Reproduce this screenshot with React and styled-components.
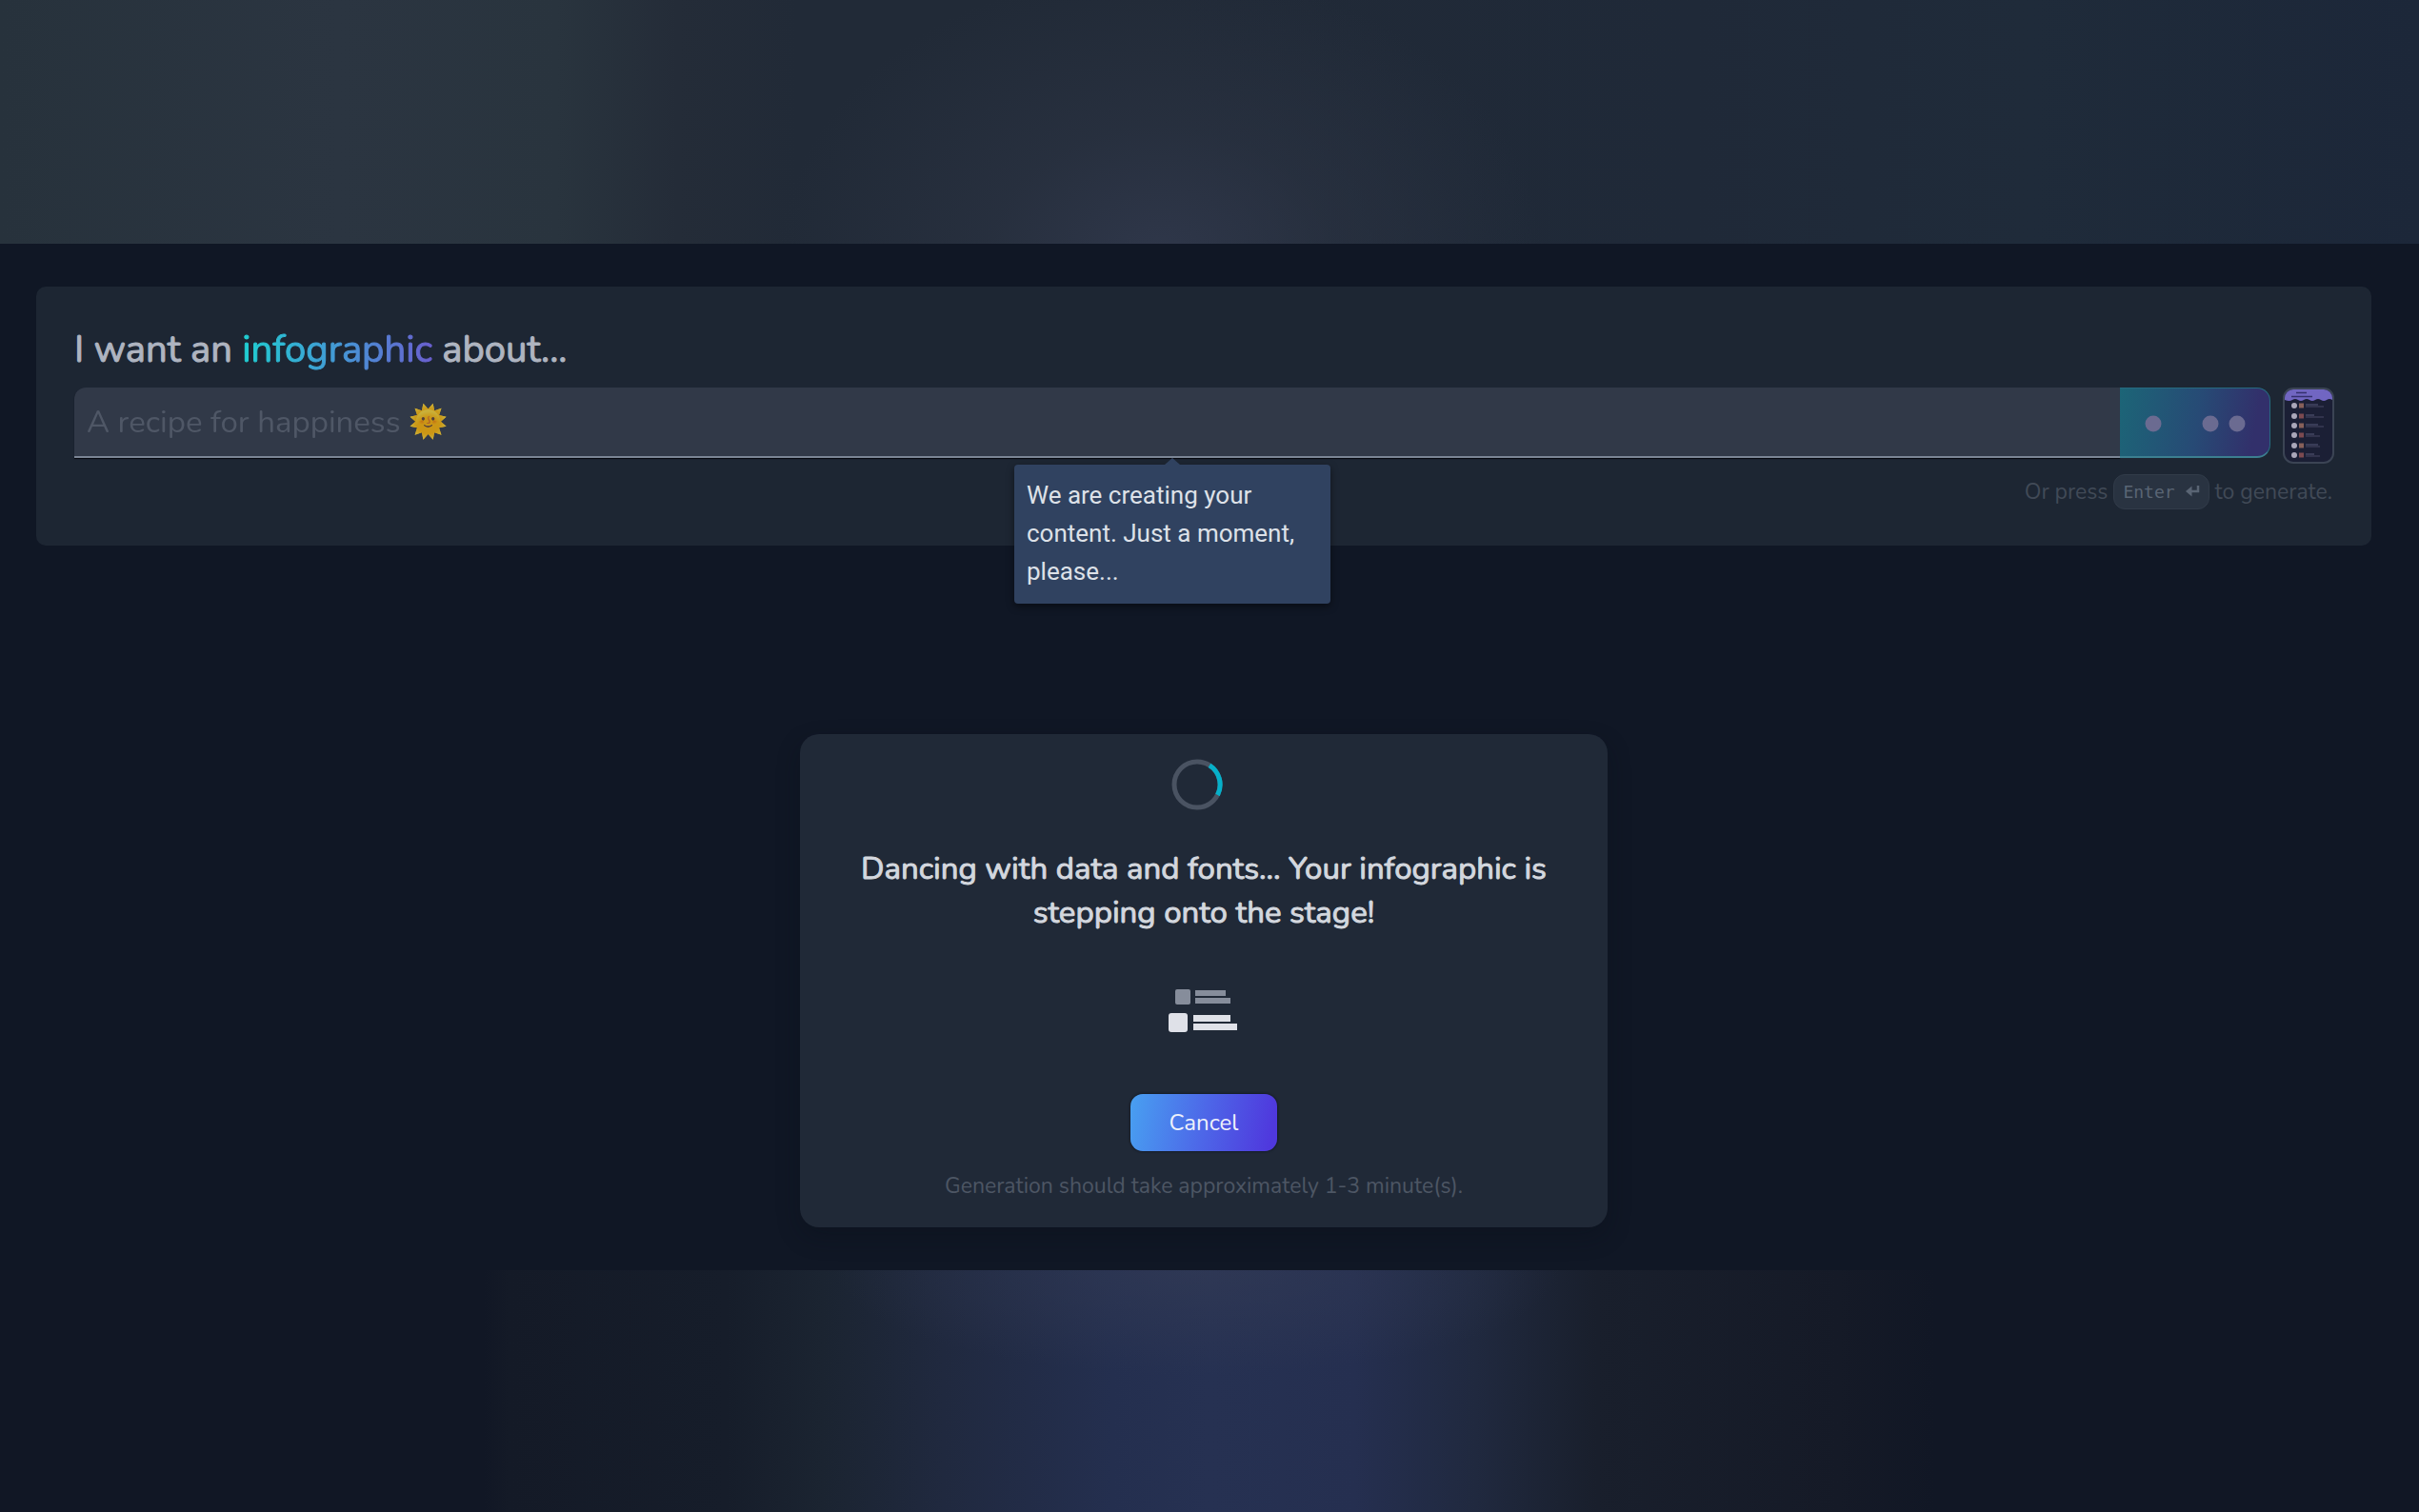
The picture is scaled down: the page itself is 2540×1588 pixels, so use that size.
import React from 'react';
import styled, { createGlobalStyle } from 'styled-components';

const GlobalStyle = createGlobalStyle`
    * {
        box-sizing: border-box;
    }

    body {
        margin: 0;
        background: #111725;
        color: #d1d5db;
        font-family: Nunito, 'Open Sans', 'Noto Sans', sans-serif;
    }
`;

const StPage = styled.div`
    min-height: 100vh;
    display: flex;
    flex-direction: column;
`;

const StTopBand = styled.div`
    height: 256px;
    background:
        radial-gradient(ellipse 400px 300px at 48% 105%, #2f374a 0%, #2b334399 45%, transparent 100%),
        linear-gradient(90deg, #27323c 0%, #2b3541 14%, #29343e 23%, #242c38 28%, #212a37 33%, #212a37 48%, #1f2938 70%, #1f2b3a 84%, #1c2739 100%);
`;

const StMain = styled.main`
    display: flex;
    flex-direction: column;
    align-items: center;
    gap: 198px;
    padding: 45px 50px 45px 38px;
    background: #101725;
`;

const StBottomBand = styled.div`
    flex: 1;
    min-height: 240px;
    background:
        radial-gradient(ellipse 380px 110px at 49.5% 0, #343c5699 0%, transparent 100%),
        linear-gradient(
            90deg,
            #111725 20%,
            #141a27 21%,
            #161d2a 30%,
            #1b2431 34%,
            #20293f 39%,
            #242f4f 46%,
            #263152 50%,
            #252f50 56%,
            #20293f 61%,
            #191f2c 66%,
            #151a27 76%,
            #111725 80%
        );
`;

const StForm = styled.form`
    align-self: stretch;
    padding: 40px 39px 38px 40px;
    border-radius: 10px;
    background: #1d2633;
`;

const StTitle = styled.label`
    display: block;
    color: #aeb4c0;
    font-size: 40px;
    line-height: 52px;
    -webkit-text-stroke: 1px;
`;

const StGradientText = styled.span`
    background: linear-gradient(90deg, #1fcfd2, #4a90d6 58%, #6a5fd0);
    background-clip: text;
    color: transparent;
`;

const StInputRow = styled.div`
    display: flex;
    align-items: flex-start;
    gap: 13px;
    margin-top: 14px;
`;

const StInputGroup = styled.div`
    position: relative;
    flex: 1;
    display: flex;
    height: 74px;
`;

const StInput = styled.input`
    flex: 1;
    min-width: 0;
    padding: 0 13px;
    border: 0;
    border-bottom: 2px solid #7b8595;
    border-radius: 12px 0 0 0;
    background: #313948;
    color: #d1d5db;
    font: inherit;
    font-size: 33px;
    box-shadow: 0 1px 1px #05070d;
    outline: none;

    &::placeholder {
        color: #596170;
        opacity: 0.75;
    }
`;

const StGenerate = styled.button`
    display: grid;
    place-items: center;
    width: 158px;
    padding: 2px 0 0;
    border: 1px solid #266a80;
    border-left: 0;
    border-bottom: 2px solid #3c7f90;
    border-radius: 0 14px 14px 0;
    background: linear-gradient(100deg, #1c6577, #274a75 52%, #32306b 88%);
`;

const StTooltip = styled.div`
    position: absolute;
    top: 81px;
    left: 987px;
    width: 332px;
    padding: 12px 13px 14px;
    border-radius: 4px;
    background: #304260;
    color: #dde1e8;
    font-family: Roboto, sans-serif;
    font-size: 26px;
    line-height: 40px;
    box-shadow: 0 3px 8px #0007;

    &::before {
        content: '';
        position: absolute;
        bottom: 100%;
        left: 50%;
        margin-left: -8px;
        border: 8px solid transparent;
        border-top: 0;
        border-bottom: 7px solid #304260;
    }
`;

const StThumb = styled.button`
    width: 54px;
    height: 80px;
    padding: 0;
    border: 2px solid #3b4454;
    border-radius: 11px;
    background: #1b1f35;
    overflow: hidden;

    svg {
        display: block;
    }
`;

const StHint = styled.p`
    display: flex;
    justify-content: flex-end;
    align-items: center;
    gap: 6px;
    margin: 11px 2px 0 0;
    color: #414a57;
    font-size: 23px;
    line-height: 36px;
`;

const StKbd = styled.kbd`
    padding: 0 9px;
    border: 1px solid #313b49;
    border-radius: 12px;
    background: #293341;
    color: #5a6574;
    font-family: 'DejaVu Sans Mono', monospace;
    font-size: 18px;
    line-height: 35px;
    -webkit-text-stroke: 0;

    svg {
        margin-left: 10px;
    }
`;

const StCard = styled.section`
    width: 848px;
    max-width: 100%;
    display: flex;
    flex-direction: column;
    align-items: center;
    padding: 26px 40px 27px;
    border-radius: 20px;
    background: #202937;
    box-shadow: 0 10px 24px #0a0e1955;
`;

const StSpinner = styled.svg`
    margin-right: 14px;
`;

const StMessage = styled.h2`
    margin: 39px 0 56px;
    color: #d3d7de;
    font-size: 33px;
    font-weight: 400;
    line-height: 46px;
    text-align: center;
    -webkit-text-stroke: 1px;
`;

const StCancel = styled.button`
    width: 154px;
    height: 60px;
    margin-top: 63px;
    border: 0;
    border-radius: 13px;
    background: linear-gradient(100deg, #48a0f1, #4d67e8 50%, #4f38dd 95%);
    color: #eef1fb;
    font: inherit;
    font-size: 24px;
    box-shadow: 0 0 3px #0b101a;
`;

const StNote = styled.p`
    margin: 21px 0 0;
    color: #4d5664;
    font-size: 23px;
    line-height: 32px;
`;

const Dots = () => (
    <svg width="106" height="20" viewBox="0 0 106 20" fill="#6b6b91" aria-hidden="true">
        <circle cx="9" cy="10" r="8.5" />
        <circle cx="69" cy="10" r="8.5" />
        <circle cx="97" cy="10" r="8.5" />
    </svg>
);

const ReturnIcon = () => (
    <svg width="16" height="14" viewBox="0 0 16 14" aria-label="return">
        <path d="M14 1v6H5" fill="none" stroke="currentColor" strokeWidth="2.5" />
        <path d="M7.500 1.500v11L1 7z" fill="currentColor" />
    </svg>
);

const TemplatePreview = () => (
    <svg width="50" height="76" viewBox="0 0 50 76" aria-hidden="true">
        <path d="M0 0h50v11q-3-2-6 0q-3 2-6 0q-3-2-6 0q-3 2-6 0q-3-2-6 0q-3 2-6 0q-3-2-6 0q-3 2-8 0z" fill="#7166c2" />
        <path d="M12 3.500h11M7 7.500h22" stroke="#35306e" strokeWidth="1.500" />
        {[17, 28, 38, 48, 59, 69].map((y, i) => (
            <g key={y}>
                <circle cx="10" cy={y} r="3" fill="#aaa7b9" />
                <rect x="15" y={y - 2.5} width="5" height="5" fill={i % 2 ? '#7c4a50' : '#87605a'} />
                <path d={`M22 ${y - 1}h${i % 2 ? 9 : 13}`} stroke="#454763" strokeWidth="1.500" />
                <path d={`M22 ${y + 1}h${i < 3 ? 19 : 15}`} stroke="#3a3b55" strokeWidth="1.500" />
            </g>
        ))}
    </svg>
);

const ListIcon = () => (
    <svg width="74" height="48" viewBox="0 0 74 48" aria-hidden="true">
        <g fill="#868d9b">
            <rect x="7" y="1" width="16" height="16" rx="2" />
            <rect x="28" y="2" width="32" height="6" />
            <rect x="28" y="10" width="37" height="6" />
        </g>
        <g fill="#dfe1e8">
            <rect x="0" y="26" width="20" height="20" rx="3" />
            <rect x="26" y="28" width="39" height="7" />
            <rect x="26" y="37" width="46" height="7" />
        </g>
    </svg>
);

const Spinner = () => (
    <StSpinner width="54" height="54" viewBox="0 0 54 54" fill="none" strokeWidth="5" role="status" aria-label="Loading">
        <circle cx="27" cy="27" r="24" stroke="#4a5362" />
        <path d="M40 6.800A24 24 0 0 1 48.500 38" stroke="#06b0c9" />
    </StSpinner>
);

const PromptForm = () => (
    <StForm onSubmit={e => e.preventDefault()}>
        <StTitle htmlFor="topic">
            I want an <StGradientText>infographic</StGradientText> about...
        </StTitle>
        <StInputRow>
            <StInputGroup>
                <StInput id="topic" type="text" placeholder="A recipe for happiness 🌞" />
                <StGenerate type="submit" aria-label="Generate">
                    <Dots />
                </StGenerate>
                <StTooltip role="tooltip">We are creating your content. Just a moment, please...</StTooltip>
            </StInputGroup>
            <StThumb type="button" aria-label="Choose template">
                <TemplatePreview />
            </StThumb>
        </StInputRow>
        <StHint>
            Or press{' '}
            <StKbd>
                Enter
                <ReturnIcon />
            </StKbd>{' '}
            to generate.
        </StHint>
    </StForm>
);

const ProgressCard = () => (
    <StCard>
        <Spinner />
        <StMessage>Dancing with data and fonts... Your infographic is stepping onto the stage!</StMessage>
        <ListIcon />
        <StCancel type="button">Cancel</StCancel>
        <StNote>Generation should take approximately 1-3 minute(s).</StNote>
    </StCard>
);

const App = () => (
    <StPage>
        <GlobalStyle />
        <StTopBand />
        <StMain>
            <PromptForm />
            <ProgressCard />
        </StMain>
        <StBottomBand />
    </StPage>
);

export default App;
